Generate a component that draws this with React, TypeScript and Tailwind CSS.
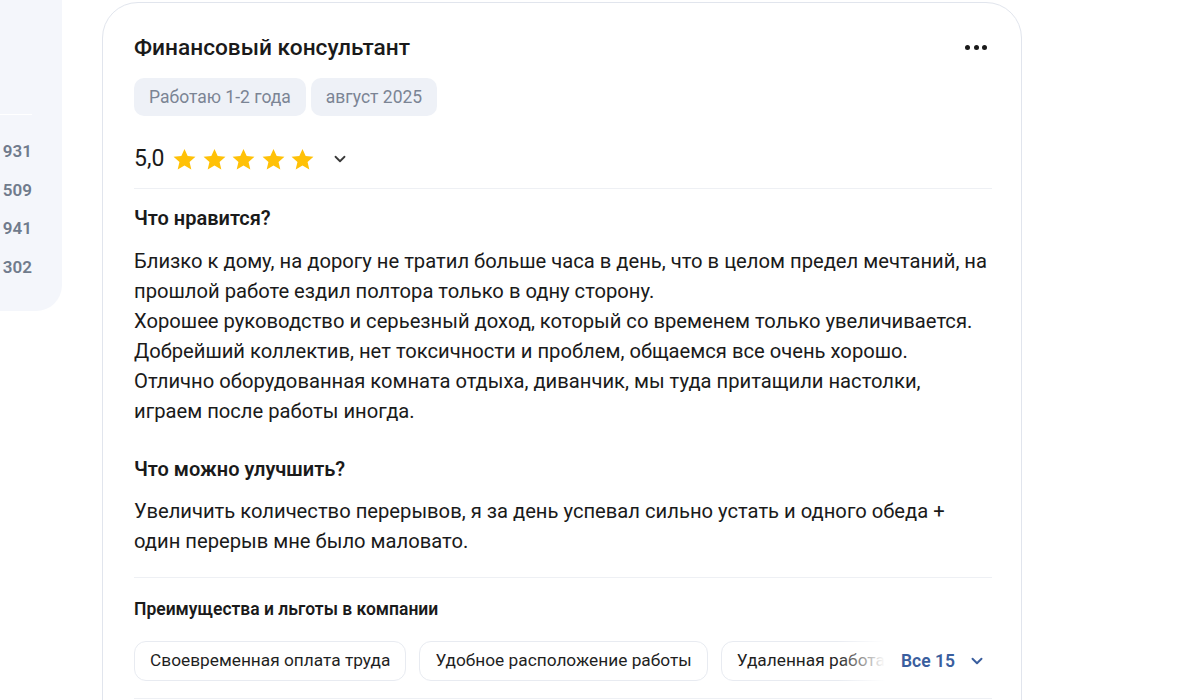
import { ChevronDown } from "lucide-react";

const numbers = ["931", "509", "941", "302"];

const benefits = [
  "Своевременная оплата труда",
  "Удобное расположение работы",
  "Удаленная работа",
];

function Star() {
  return (
    <svg width="25" height="25" viewBox="0 0 24 24" className="shrink-0">
      <path
        d="M12 1.8l3.05 6.9 7.45.7-5.65 4.95 1.7 7.35L12 17.85 5.45 21.7l1.7-7.35L1.5 9.4l7.45-.7z"
        fill="#ffc107"
      />
    </svg>
  );
}

export default function App() {
  return (
    <div
      className="w-[1200px] h-[700px] overflow-hidden bg-white flex items-start text-[#1a1a1a]"
      style={{ fontFamily: "Roboto, 'Noto Sans', sans-serif" }}
    >
      {/* side stats panel, cut off at the left */}
      <div className="w-[62px] h-[311px] shrink-0 bg-[#f4f6fb] rounded-br-[26px] pt-[114px]">
        <div className="h-px w-[32px] bg-white" />
        <div className="flex flex-col items-end pr-[30px] pt-[17px]">
          {numbers.map((n) => (
            <div key={n} className="h-[38.7px] leading-[38px] text-[17px] font-semibold text-[#707b8c]">
              {n}
            </div>
          ))}
        </div>
      </div>

      {/* review card */}
      <div className="ml-[40px] mt-[2px] w-[920px] h-[760px] shrink-0 border border-[#e1e5ed] rounded-[36px] pl-[31px] pr-[29px] pt-[31px]">
        <div className="flex items-center justify-between h-[28px]">
          <h3 className="text-[22.7px] leading-[28px] font-medium">Финансовый консультант</h3>
          <div className="flex items-center gap-[3.5px] pr-[5px] pb-[2px]">
            <span className="w-[5px] h-[5px] rounded-full bg-[#1a1a1a]" />
            <span className="w-[5px] h-[5px] rounded-full bg-[#1a1a1a]" />
            <span className="w-[5px] h-[5px] rounded-full bg-[#1a1a1a]" />
          </div>
        </div>

        <div className="flex gap-[5px] mt-[16px]">
          <span className="h-[38px] px-[15px] flex items-center rounded-[10px] bg-[#eef1f7] text-[17.5px] text-[#7b8494]">
            Работаю 1-2 года
          </span>
          <span className="h-[38px] px-[15px] flex items-center rounded-[10px] bg-[#eef1f7] text-[17.5px] text-[#7b8494]">
            август 2025
          </span>
        </div>

        <div className="flex items-center h-[28px] mt-[29px]">
          <span className="text-[23px] leading-[28px] mr-[8px]">5,0</span>
          <div className="flex gap-[4.5px]">
            <Star />
            <Star />
            <Star />
            <Star />
            <Star />
          </div>
          <ChevronDown className="w-[18px] h-[18px] ml-[16px] text-[#3a3a3a]" strokeWidth={2.4} />
        </div>

        <div className="h-px bg-[#eef0f4] mt-[15px]" />

        <h4 className="mt-[17px] text-[20px] leading-[24px] font-semibold">Что нравится?</h4>
        <p className="mt-[16px] text-[20.2px] leading-[30px] whitespace-pre-line">
          {`Близко к дому, на дорогу не тратил больше часа в день, что в целом предел мечтаний, на прошлой работе ездил полтора только в одну сторону.
Хорошее руководство и серьезный доход, который со временем только увеличивается.
Добрейший коллектив, нет токсичности и проблем, общаемся все очень хорошо.
Отлично оборудованная комната отдыха, диванчик, мы туда притащили настолки, играем после работы иногда.`}
        </p>

        <h4 className="mt-[31px] text-[20px] leading-[24px] font-semibold">Что можно улучшить?</h4>
        <p className="mt-[15px] text-[20.2px] leading-[30px]">
          Увеличить количество перерывов, я за день успевал сильно устать и одного обеда + один перерыв мне было маловато.
        </p>

        <div className="h-px bg-[#eef0f4] mt-[21px]" />

        <h4 className="mt-[20px] text-[17.5px] leading-[22px] font-semibold">
          Преимущества и льготы в компании
        </h4>

        <div className="flex items-center mt-[21px]">
          <div className="relative flex-1 flex gap-[13px] overflow-hidden">
            {benefits.map((b) => (
              <span
                key={b}
                className="shrink-0 h-[40px] px-[15px] flex items-center rounded-[12px] border border-[#e8ebf1] text-[17.3px] text-[#1f1f1f] whitespace-nowrap"
              >
                {b}
              </span>
            ))}
            <div className="absolute right-0 top-0 h-full w-[48px] bg-gradient-to-r from-white/0 to-white" />
          </div>
          <button className="flex items-center ml-[16px] shrink-0 text-[17.5px] font-semibold text-[#3a5e9e]">
            Все 15
            <ChevronDown className="w-[18px] h-[18px] ml-[13px]" strokeWidth={2.6} />
          </button>
          <div className="w-[6px]" />
        </div>

        <div className="h-px bg-[#eef0f4] mt-[17px]" />
      </div>
    </div>
  );
}
